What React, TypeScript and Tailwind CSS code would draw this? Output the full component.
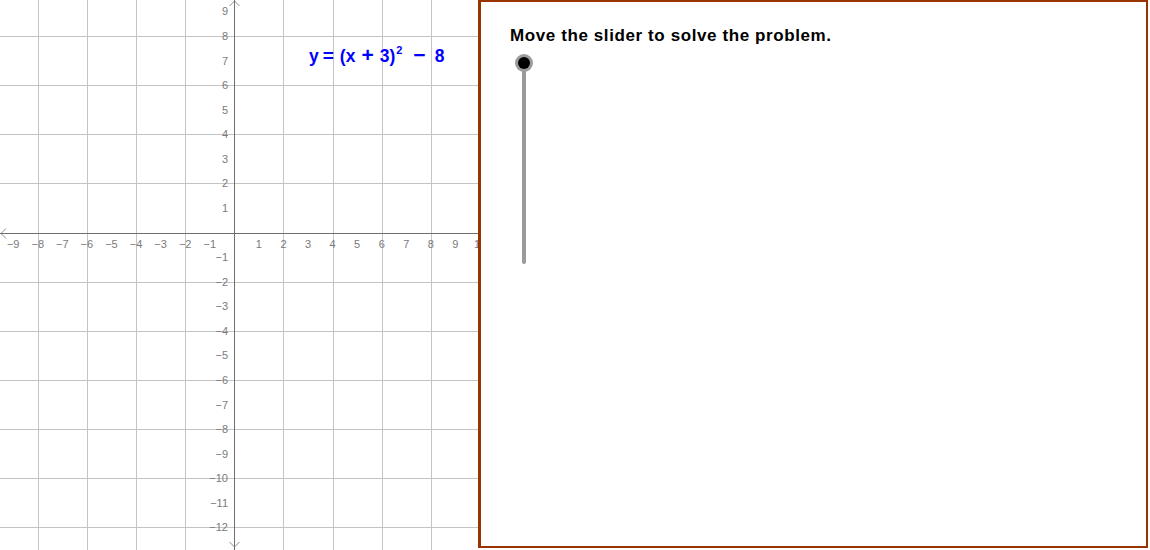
import React from 'react';

const UNIT = 24.57;
const OX = 234.3;
const OY = 232.6;
const W = 478;
const H = 550;

const px = (v: number) => Math.round(OX + v * UNIT) + 0.5;
const py = (v: number) => Math.round(OY - v * UNIT) + 0.5;
const fmt = (n: number) => (n < 0 ? `\u2212${-n}` : `${n}`);

const Graph: React.FC = () => {
  const vGrid = [-8, -6, -4, -2, 2, 4, 6, 8, 10];
  const hGrid = [8, 6, 4, 2, -2, -4, -6, -8, -10, -12];
  const xTicks = [-9, -8, -7, -6, -5, -4, -3, -2, -1, 1, 2, 3, 4, 5, 6, 7, 8, 9, 10];
  const yTicks = [9, 8, 7, 6, 5, 4, 3, 2, 1, -1, -2, -3, -4, -5, -6, -7, -8, -9, -10, -11, -12];
  const ax = px(0);
  const ay = py(0);

  return (
    <svg width={W} height={H} className="block">
      {vGrid.map((g) => (
        <line key={`v${g}`} x1={px(g)} x2={px(g)} y1={0} y2={H} stroke="#c4c4c4" strokeWidth={1} />
      ))}
      {hGrid.map((g) => (
        <line key={`h${g}`} x1={0} x2={W} y1={py(g)} y2={py(g)} stroke="#c4c4c4" strokeWidth={1} />
      ))}
      <line x1={ax} x2={ax} y1={0} y2={H} stroke="#6f6f6f" strokeWidth={1} />
      <line x1={0} x2={W} y1={ay} y2={ay} stroke="#6f6f6f" strokeWidth={1} />
      <polyline points={`${ax - 5},${6} ${ax},1 ${ax + 5},${6}`} fill="none" stroke="#6f6f6f" strokeWidth={0.8} />
      <polyline points={`${ax - 5},${H - 8} ${ax},${H - 3} ${ax + 5},${H - 8}`} fill="none" stroke="#6f6f6f" strokeWidth={0.8} />
      <polyline points={`6,${ay - 5} 1,${ay} 6,${ay + 5}`} fill="none" stroke="#6f6f6f" strokeWidth={0.8} />
      <g fontFamily="'Liberation Sans', Arial, sans-serif" fontSize={11} fill="#7a7a7a">
        {xTicks.map((t) => (
          <text key={`xt${t}`} x={OX + t * UNIT} y={247.5} textAnchor="middle">
            {fmt(t)}
          </text>
        ))}
        {yTicks.map((t) => (
          <text key={`yt${t}`} x={228} y={OY - t * UNIT + 4} textAnchor="end">
            {fmt(t)}
          </text>
        ))}
      </g>
    </svg>
  );
};

// y = (x + 3)^2 − 8, spaced like the math renderer
const Formula: React.FC = () => (
  <div className="absolute left-[309px] top-[44px] flex items-baseline text-[#0000ff] font-bold text-[17.5px] leading-[22px] whitespace-nowrap font-['Liberation_Sans',Arial,sans-serif]">
    <span>y</span>
    <span className="ml-[4px] text-[19px]">=</span>
    <span className="ml-[6px]">(</span>
    <span>x</span>
    <span className="ml-[6px] text-[21px]">+</span>
    <span className="ml-[6px]">3</span>
    <span>)</span>
    <span className="ml-[1px] text-[11px] relative -top-[8px]">2</span>
    <span className="ml-[11px] text-[21px]">−</span>
    <span className="ml-[9px]">8</span>
  </div>
);

export default function App() {
  return (
    <div className="flex w-[1150px] h-[550px] bg-white overflow-hidden">
      <div className="relative w-[478px] h-[550px] overflow-hidden shrink-0">
        <Graph />
        <Formula />
      </div>
      <div className="w-[670px] h-[548px] shrink-0 border-2 border-l-[3px] border-[#993300] bg-white pl-[29px] pt-[23px]">
        <div className="text-[17px] leading-[22px] font-bold tracking-[0.6px] text-black whitespace-nowrap font-['Liberation_Sans',Arial,sans-serif]">
          Move the slider to solve the problem.
        </div>
        <div className="relative w-[18px] h-[210px] mt-[7px] ml-[5px]">
          <div className="absolute left-[7px] top-[9px] w-1 h-[201px] rounded-full bg-[#9a9a9a]" />
          <div className="absolute left-0 top-0 w-[18px] h-[18px] rounded-full bg-[#9c9c9c] flex items-center justify-center">
            <div className="w-3 h-3 rounded-full bg-black" />
          </div>
        </div>
      </div>
    </div>
  );
}
